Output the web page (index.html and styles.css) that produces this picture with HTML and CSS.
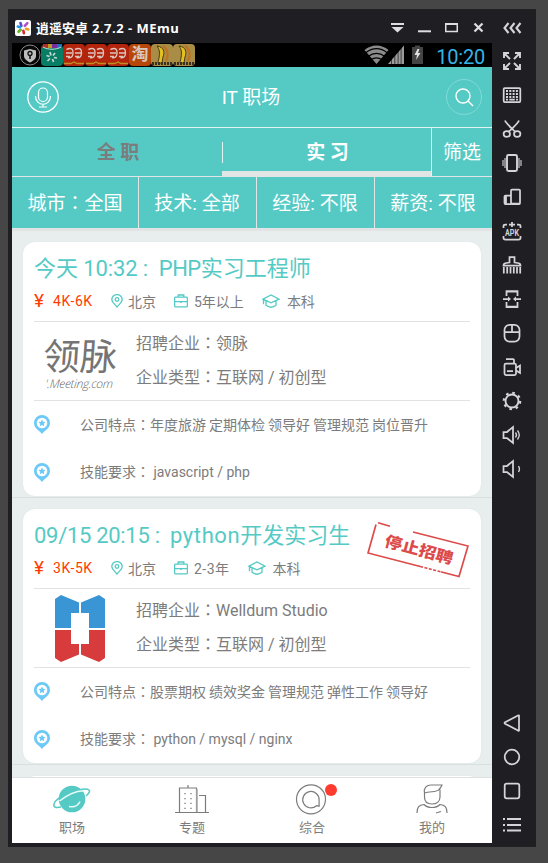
FILE: index.html
```html
<!DOCTYPE html>
<html lang="zh-CN">
<head>
<meta charset="utf-8">
<title>逍遥安卓 2.7.2 - MEmu</title>
<link rel="stylesheet" href="styles.css">
</head>
<body>
<svg width="0" height="0" class="defs" aria-hidden="true">
  <symbol id="pin" viewBox="0 0 12 14"><path d="M6 13C3 9.500.8 8 .8 5.600a5.200 5 0 0 1 10.400 0C11.200 8 9 9.500 6 13Z"/><circle cx="6" cy="5.500" r="1.800"/></symbol>
  <symbol id="bag" viewBox="0 0 14 14"><rect x=".6" y="3.200" width="12.800" height="9.700" rx="1"/><path d="M4.200 3V1h5.600v2M.6 7.700h12.800"/><path d="M6 7h2v1.800H6z" fill="currentColor" stroke="none"/></symbol>
  <symbol id="cap" viewBox="0 0 18 14"><path d="M1 5.200 9 1l8 4.200-8 3.700zM4 7v4.300c3 2.300 7 2.300 10 0V7M1.500 5.500v4.800"/></symbol>
  <symbol id="star-pin" viewBox="0 0 16 19"><path fill="#6cc9f8" d="M8 19C5.500 15.500 0 13.500 0 8a8 8 0 0 1 16 0c0 5.500-5.500 7.500-8 11Z"/><circle cx="8" cy="8" r="5.300" fill="#fff"/><path fill="#6cc9f8" d="m8 4.600 1.100 2.200 2.400.3-1.700 1.700.4 2.400L8 10.100l-2.200 1.100.4-2.400-1.700-1.700 2.400-.3z"/></symbol>
  <symbol id="memu" viewBox="0 0 16 16"><rect width="16" height="16" rx="2" fill="#fff"/><g stroke-width="2.600" stroke-linecap="round"><path stroke="#5b4bd0" d="M6.400 5.800 5.500 3"/><path stroke="#b34ccf" d="m9.800 5.800 2.500-2.600"/><path stroke="#ef9a1d" d="m11 8.800 2.300.6"/><path stroke="#d8292c" d="m8.400 10.800.5 2.400"/><path stroke="#69b52e" d="m5.700 9.900-2.200 1.700"/><path stroke="#2196e8" d="M5 7.300 2.800 6.600"/></g></symbol>
  <symbol id="shop" viewBox="0 0 22 22"><rect width="22" height="22" rx="4" fill="#b3240c"/><g fill="none" stroke="#dcc4bd" stroke-width="1.400"><path d="M3.500 5.500c5-2.500 6.500 0 6.500 3s-1 6-5 5M3 9h6M3 12.500h4M12 5.500c5-2.500 6.500 0 6.500 3s-1 6-5 5M12 9h6M12 12.500h4"/></g><path d="M1 19.500h7l3-1.500 3 1.500h7" fill="none" stroke="#bd8f20" stroke-width="1.300"/></symbol>
  <symbol id="banana" viewBox="0 0 22 22"><rect width="22" height="22" rx="4" fill="#a98c45"/><path fill="#e2c01f" stroke="#4b3b14" d="M6 2c7 1 8 6 6 11l-1 6H7c0-3 4-11-1-17Z"/><path fill="none" stroke="#c26f1f" stroke-width="2" d="M12 2c5 3 6 9 3 15"/><path stroke="#3a3022" stroke-width="3" stroke-dasharray="2 1" d="M1 19.500h20"/></symbol>
</svg>

<div class="window">
  <div class="main">
    <header class="titlebar">
      <svg class="logo"><use href="#memu"/></svg>
      <h1>逍遥安卓<span> 2.7.2 - MEmu</span></h1>
      <nav class="controls">
        <svg viewBox="0 0 27 20"><path d="M7 5h13v2H7zM7.500 9h12l-6 5.500z"/></svg>
        <svg viewBox="0 0 27 20"><path d="M7 12.300h13v2H7z"/></svg>
        <svg viewBox="0 0 27 20"><path fill-rule="evenodd" d="M7 5h13v9.300H7zm1.500 2v5.800h10V7z"/></svg>
        <svg viewBox="0 0 27 20"><path d="m9.500 5.500 8 8m0-8-8 8" stroke="#dedee0" stroke-width="2.200"/></svg>
      </nav>
    </header>

    <div class="screen">
      <div class="status">
        <div class="notes">
          <svg viewBox="0 0 22 22"><circle cx="11" cy="11" r="10" fill="#080808" stroke="#8a8a8a"/><path d="M5 6.500 11 5l6 1.500V12c0 3-3 5-6 6.500C8 17 5 15 5 12z" fill="#bdbdbd"/><circle cx="11" cy="9.500" r="2" fill="none" stroke="#111" stroke-width="1.300"/><path d="M11 11.500V15" stroke="#111" stroke-width="1.500"/></svg>
          <svg viewBox="0 0 22 22"><rect y="1" width="22" height="21" rx="4" fill="#087d66"/><path fill="#a8312b" d="M2 0h5v4H1z"/><path fill="#b79a1f" d="M7 0h4v4H7z"/><path fill="#7b2aa2" d="M11 0h5v4h-5z"/><path fill="#1b72b5" d="M16 0h5v4h-5z"/><path d="M2 3c5 3 13 3 18 0" stroke="#c5d8d2" fill="none"/><path d="m10 11.500-1-3.500m3 3.500 2-2.500m-1 4.500 3 .5m-4.500 1 1 3m-3.500-3.500-2.500 2.500m2-4.500-3-1" stroke="#c5d8d2" stroke-width="1.700"/></svg>
          <svg><use href="#shop"/></svg>
          <svg><use href="#shop"/></svg>
          <svg><use href="#shop"/></svg>
          <span class="tao">淘</span>
          <svg><use href="#banana"/></svg>
          <svg><use href="#banana"/></svg>
        </div>
        <svg class="signals" viewBox="0 0 60 20"><path d="M.5 5c7-6 17-6 24 0l-12 14z" fill="#8b8b8b"/><path d="M1.500 8c7-5.500 15-5.500 22 0M4 11.400c5.500-4 11.500-4 17 0M7 14.600c4-2.600 7-2.600 11 0" fill="none" stroke="#000" stroke-width="1.200"/><path d="M40 .5V19H24z" fill="#9b9b9b"/><path d="M27.500 8v12m3.300-15v15m3.300-18v18m3-20v20" stroke="#000" stroke-width=".6"/><path d="M48 2h3V.5h5V2h3v17H48z" fill="#444"/><path d="m53.500 4-3 6h2.500l-1 5 4.500-7H54l1.500-4z" fill="#e0e0e0"/></svg>
        <time>10:20</time>
      </div>

      <div class="appbar">
        <svg class="mic" viewBox="0 0 32 32"><circle cx="16" cy="16" r="15.200" stroke-width="1.300"/><rect x="11.500" y="7" width="9" height="13.500" rx="4.500"/><path d="M8.500 15c0 11 15 11 15 0M16 23v3M12 26h8"/></svg>
        <h2>IT 职场</h2>
        <svg class="search" viewBox="0 0 36 36"><circle cx="18" cy="18" r="17.500" stroke="#82dad5"/><g stroke="#fff" stroke-width="1.400"><circle cx="17" cy="17" r="7"/><path d="m22 22 5 5"/></g></svg>
      </div>

      <div class="tabs">
        <div class="tab off">全 职</div>
        <div class="tab on">实 习</div>
        <div class="pick">筛选</div>
      </div>

      <div class="filters">
        <div>城市<i lang="zh-TW">：</i>全国</div>
        <div>技术: 全部</div>
        <div>经验: 不限</div>
        <div>薪资: 不限</div>
      </div>

      <div class="list">
        <section class="item">
          <article class="card">
            <h3><span class="when">今天 10:32 :&nbsp; </span><span class="caps">PHP</span>实习工程师</h3>
            <div class="meta">
              <b>¥</b><em>4K-6K</em>
              <svg class="pin"><use href="#pin"/></svg><span>北京</span>
              <svg class="bag"><use href="#bag"/></svg><span>5年以上</span>
              <svg class="cap"><use href="#cap"/></svg><span>本科</span>
            </div>
            <div class="company">
              <div class="brand">
                <div class="meeting"><strong>领脉</strong><small>'.Meeting.com</small></div>
              </div>
              <div class="facts"><p>招聘企业<i lang="zh-TW">：</i>领脉</p><p>企业类型<i lang="zh-TW">：</i>互联网 / 初创型</p></div>
            </div>
            <div class="features">
              <p><svg><use href="#star-pin"/></svg><span>公司特点<i lang="zh-TW">：</i>年度旅游 定期体检 领导好 管理规范 岗位晋升</span></p>
              <p><svg><use href="#star-pin"/></svg><span>技能要求<i lang="zh-TW">：</i> javascript / php</span></p>
            </div>
          </article>
        </section>

        <section class="item">
          <article class="card">
            <h3><span class="when date">09/15 20:15 :&nbsp; </span><span class="lower">python</span>开发实习生</h3>
            <div class="meta">
              <b>¥</b><em>3K-5K</em>
              <svg class="pin"><use href="#pin"/></svg><span>北京</span>
              <svg class="bag"><use href="#bag"/></svg><span class="years">2-3年</span>
              <svg class="cap"><use href="#cap"/></svg><span>本科</span>
            </div>
            <div class="company">
              <div class="brand">
                <svg class="welldum" viewBox="0 0 50 67"><path fill="#3a95d5" d="M0 4 6 0l18 7.500V18h-8v15H0zM50 4l-6-4-18 7.500V18h8v15h16z"/><path fill="#d83b3b" d="M0 63l6 4 18-7.500V49h-8V35H0zM50 63l-6 4-18-7.500V49h8V35h16z"/></svg>
              </div>
              <div class="facts"><p>招聘企业<i lang="zh-TW">：</i>Welldum Studio</p><p>企业类型<i lang="zh-TW">：</i>互联网 / 初创型</p></div>
            </div>
            <div class="features">
              <p><svg><use href="#star-pin"/></svg><span>公司特点<i lang="zh-TW">：</i>股票期权 绩效奖金 管理规范 弹性工作 领导好</span></p>
              <p><svg><use href="#star-pin"/></svg><span>技能要求<i lang="zh-TW">：</i> python / mysql / nginx</span></p>
            </div>
            <div class="stamp">
              <svg viewBox="0 0 102 56"><path d="M9 2.500 1 31l91 23.500 9-30.500L46 10M11 .8l12 3.400" fill="none" stroke="#dc4a4a" stroke-width="1.700"/><path d="m56 45.300 18 4.700" stroke="#fff" stroke-width="2.500" stroke-dasharray="1.500 3"/></svg>
              <span>停止招聘</span>
            </div>
          </article>
        </section>

        <section class="item"><article class="card"></article></section>
      </div>

      <nav class="bottom">
        <a>
          <svg viewBox="0 0 40 32"><circle cx="20" cy="16" r="13.300" fill="#55cac5"/><path d="M9 24c-5 1-8 .5-7-3C4 13 33 3 37 7c1.500 1-.5 4-3 6" fill="none" stroke="#55cac5" stroke-width="1.500"/><path d="M7.500 18C15 12 24 8 31.500 7.700M17 23.500c5 1 9-.5 11-5" fill="none" stroke="#e6fbf9" stroke-width="1.600"/></svg>
          <span>职场</span>
        </a>
        <a>
          <svg viewBox="0 0 40 32"><path d="M3 29.500h34M7.500 29V5h17v24M16 5V2M27 12.500h6.500V29" fill="none" stroke="#7c7c7c" stroke-width="1.200"/><path d="M25 6v23" stroke="#a8a8a8" stroke-width="1.500"/><path d="M13 10v17M19 10v17" stroke="#7c7c7c" stroke-width="1.300" stroke-dasharray="1.300 3.600"/></svg>
          <span>专题</span>
        </a>
        <a>
          <svg viewBox="0 0 40 32"><g fill="none" stroke="#7c7c7c" stroke-width="1.200"><circle cx="19" cy="16.300" r="14.500"/><path d="M24.500 22.700a8.200 8.200 0 1 1 2.600-5.500v6z"/></g></svg>
          <u></u>
          <span>综合</span>
        </a>
        <a>
          <svg viewBox="0 0 40 32"><path d="M12.500 10c-1-5 2-8 6.500-8h11c-1 2.500-2 3.500-3 4.500-2 3-9 1.500-14.500 3.500V14c0 4.500 3 7 7.500 7s8-2.500 8-7V6.500M5 30c0-6 2-8 7-8.500 4 4 12 4 16 0 5 .5 7 2.500 7 8.500M24 30l5-1.500" fill="none" stroke="#7c7c7c" stroke-width="1.200"/></svg>
          <span>我的</span>
        </a>
      </nav>
    </div>
  </div>

  <aside class="tools">
    <svg class="collapse" viewBox="0 0 20 20"><path d="M6.500 5 2.500 10l4 5M12.500 5l-4 5 4 5M18.500 5l-4 5 4 5" stroke-width="2.100"/></svg>
    <svg viewBox="0 0 20 20"><path d="M2 7V2h5M2.500 2.500 8 8M13 2h5v5M17.500 2.500 12 8M2 13v5h5m-4.500-.5L8 12m5 6h5v-5m-.5 4.500L12 12" stroke-width="1.900"/></svg>
    <svg viewBox="0 0 20 20"><rect x="1.700" y="3" width="16.600" height="14" rx="1"/><path d="M4 6h12M4 9h12M4 12h12" stroke-width="2" stroke-dasharray="2 1.300"/><path d="M4 14.500h12" stroke-dasharray="2 1.300 5.500 1.300"/></svg>
    <svg viewBox="0 0 20 20"><path d="M3 1.500c1 3 7 8 10.500 11.500M17 1.500c-1 3-7 8-10.500 11.500"/><ellipse cx="4.800" cy="15" rx="3.200" ry="2.800"/><ellipse cx="15.200" cy="15" rx="3.200" ry="2.800"/></svg>
    <svg viewBox="0 0 20 20"><rect x="5" y="2" width="10" height="16" rx="1.500" stroke-width="1.900"/><path d="M3 5v10M17 5v10M1 7v6M19 7v6" stroke-width="1.100"/></svg>
    <svg viewBox="0 0 20 20"><rect x="9" y="2.500" width="9" height="14.500" rx="1"/><path d="M9 8.500H3.500q-1 0-1 1V16q0 1 1 1H9M4 8v9M9 16.500h9"/></svg>
    <svg viewBox="0 0 20 20"><path d="M1.500 7V5q0-1.500 2-1.500H5M15 3.500h1.500q2 0 2 1.500v2M1.500 15v2q0 1.500 2 1.500h13q2 0 2-1.500v-2M10 1v5M7 3.500h6"/><text x="10" y="15" textLength="14" lengthAdjust="spacingAndGlyphs">APK</text></svg>
    <svg viewBox="0 0 20 20"><path d="M1.500 10.500c0-2 1-2.500 6-3V2h5v5.500c5 .5 6 1 6 3zM1.800 12v6.500M5.200 12v6.500M8.500 12v6.500M11.800 12v6.500M15 12v6.500M18.200 12v6.500"/></svg>
    <svg viewBox="0 0 20 20"><path d="M4.500 7V2h11v5M4.500 13v5h11v-5M5 17.500h10M5 2.500h10M1 10h7M19 10h-7"/><path d="M6 7.500 9 10l-3 2.500zM14 7.500 11 10l3 2.500z" fill="#d5d5d7" stroke="none"/></svg>
    <svg viewBox="0 0 20 20"><rect x="2.500" y="1.800" width="15" height="16.800" rx="5"/><path d="M2.500 9h15M10 2v7"/></svg>
    <svg viewBox="0 0 20 20"><rect x="2.500" y="6.500" width="11.500" height="11.500" rx="1.500"/><path d="M4 2h7q1 0 1 1v3M5 14h6M14 11l4-2.500v7.500L14 13.500"/></svg>
    <svg viewBox="0 0 20 20"><circle cx="10" cy="10" r="6.500" stroke-width="1.900"/><circle cx="10" cy="10" r="8.200" stroke-width="2.200" stroke-dasharray="2.600 3.840"/></svg>
    <svg viewBox="0 0 20 20"><path d="M1.500 7H5l6-5v16l-6-5H1.500z"/><path d="M13.500 7.500q2 2.500 0 5M15.500 5.500q3.500 4.500 0 9" stroke-width="1.300"/></svg>
    <svg viewBox="0 0 20 20"><path d="M1.500 7H5l6-5v16l-6-5H1.500z"/><path d="M16.500 7q2 3 0 6" stroke-width="1.300"/></svg>
    <svg class="back" viewBox="0 0 20 20"><path d="M17 2.500v15q-.3.600-1 0L3 10.700q-1-.7 0-1.400L16 2.500q.6-.3 1 0Z"/></svg>
    <svg viewBox="0 0 20 20"><circle cx="10" cy="10" r="7.300"/></svg>
    <svg viewBox="0 0 20 20"><rect x="2.700" y="2.700" width="14.600" height="14.600" rx="2"/></svg>
    <svg viewBox="0 0 20 20"><path d="M1 4h2m2 0h14M1 10h2m2 0h14M1 15.500h2m2 0h14" stroke-width="1.900"/></svg>
  </aside>
</div>
</body>
</html>
```
FILE: styles.css
```css
* { box-sizing: border-box; }

body {
  margin: 0;
  width: 548px;
  height: 863px;
  overflow: hidden;
  padding: 9px 12px 16px 8px;
  background: #464646;
  font-family: Roboto, "Noto Sans CJK SC", sans-serif;
}

h1, h2, h3, p { margin: 0; font-weight: 400; }
i { font-style: normal; font-family: "Noto Sans CJK TC", sans-serif; line-height: 0; }
svg { display: block; flex: none; }
.defs { position: absolute; }

.window {
  display: flex;
  height: 838px;
  background: #1f1e23;
}
.main { width: 484px; padding-left: 4px; }

.titlebar {
  display: flex;
  align-items: center;
  height: 34px;
  padding: 4px 0 0 3px;
}
.logo { width: 16px; height: 16px; margin-top: -1px; }
.titlebar h1 {
  margin: -2px auto 0 5px;
  color: #fff;
  font: 700 13px "Open Sans", "Noto Sans CJK SC", sans-serif;
  white-space: nowrap;
}
.titlebar h1 span { letter-spacing: .5px; }
.controls { display: flex; }
.controls svg { width: 27px; height: 20px; fill: #dedee0; }

.screen {
  display: flex;
  flex-direction: column;
  width: 480px;
  height: 800px;
  background: #e8eeee;
}

.status {
  display: flex;
  flex: none;
  height: 24px;
  padding: 1px 7px 0;
  background: #000;
}
.notes { display: flex; margin-right: auto; }
.notes svg { width: 22px; height: 22px; }
.tao {
  width: 22px;
  height: 22px;
  border-radius: 4px;
  background: #b74708;
  color: #d8c7bd;
  font-size: 17px;
  font-weight: 700;
  line-height: 20px;
  text-align: center;
}
.signals { width: 60px; height: 20px; margin: 1px 12px 0 0; }
.status time { color: #33b5e5; font-size: 20px; line-height: 27px; letter-spacing: -.2px; }

.appbar {
  display: flex;
  flex: none;
  align-items: center;
  justify-content: space-between;
  height: 60px;
  padding: 0 10px 0 15px;
  background: #55cac5;
  color: #fff;
}
.appbar h2 { font-size: 19px; margin: -4px 3px 0 0; }
.mic, .search { fill: none; stroke: #fff; }
.mic { width: 32px; height: 32px; stroke-width: 1.200; }
.search { width: 36px; height: 36px; }

.tabs {
  display: flex;
  flex: none;
  height: 50px;
  border-top: 1px solid #e1f3f2;
  border-bottom: 1px solid #e1e5e5;
  background: #55cac5;
  color: #fff;
  font-size: 19px;
  line-height: 50px;
  text-align: center;
}
.tab { width: 210px; height: 48px; font-weight: 700; }
.off { color: #7c7c7c; padding-left: 2px; }
.on {
  width: 209px;
  padding-left: 2px;
  border-bottom: 5px solid #e1e5e5;
  background: linear-gradient(#e1f3f2, #e1f3f2) 0 14px / 1px 21px no-repeat;
}
.pick { flex: 1; height: 48px; border-left: 1px solid #e1f3f2; }

.filters {
  display: grid;
  flex: none;
  grid-template-columns: 126px 118px 118px 118px;
  height: 54px;
  border-bottom: 3px solid #e1e3e4;
  background: #55cac5;
  color: #fff;
  font-size: 19px;
  line-height: 54px;
  text-align: center;
  white-space: nowrap;
}
.filters div { height: 51px; }
.filters div + div { border-left: 1px solid #e1e5e5; padding-right: 1px; }

.list { flex: 1; min-height: 0; overflow: hidden; }
.item {
  height: 267px;
  padding: 11px 11px 1px;
  border-bottom: 1px solid #d9dede;
}
.card {
  position: relative;
  height: 254px;
  padding: 11px 11px 0;
  border-radius: 12px;
  background: #fff;
  box-shadow: 0 0 1px #d2d8d8;
  color: #7c7c7c;
}
.card h3 {
  height: 32px;
  color: #55cac5;
  font-size: 22px;
  line-height: 32px;
  white-space: nowrap;
}
.when { letter-spacing: -.1px; }
.date { letter-spacing: -.3px; }
.caps { letter-spacing: -.5px; }
.lower { letter-spacing: .6px; }

.meta {
  display: flex;
  align-items: center;
  height: 37px;
  padding-bottom: 5px;
  border-bottom: 1px solid #e1e3e3;
  font-size: 14px;
  white-space: nowrap;
}
.meta b, .meta em { color: #ff3c00; font-style: normal; }
.meta b { width: 19px; font-size: 19px; font-weight: 400; line-height: 30px; }
.meta em { width: 58px; letter-spacing: .6px; }
.meta svg { fill: none; stroke: #55cac5; stroke-width: 1.300; color: #55cac5; }
.years { letter-spacing: .5px; }
.pin { width: 12px; height: 14px; margin-right: 5px; }
.bag { width: 14px; height: 14px; margin: 0 6px 0 18px; }
.cap { width: 18px; height: 14px; margin: 0 7px 0 18px; }

.company {
  display: flex;
  height: 79px;
  border-bottom: 1px solid #e1e3e3;
}
.brand { display: flex; width: 102px; }
.welldum { width: 50px; height: 67px; margin: 6px 0 0 21px; }
.meeting { width: 84px; padding: 14px 0 0 9px; transform: skewX(-4deg); }
.meeting strong, .meeting small { display: block; white-space: nowrap; }
.meeting strong { font-size: 37px; font-weight: 400; line-height: 43px; color: #747474; }
.meeting small { margin: -2px 0 0 4px; font: italic 300 12px/13px "Open Sans", sans-serif; color: #666; letter-spacing: -.3px; }
.facts { padding-top: 5px; font-size: 16px; line-height: 34px; }

.features p {
  display: flex;
  align-items: center;
  height: 48px;
  font-size: 14px;
  line-height: 18px;
  white-space: pre;
}
.features p:first-child { height: 47px; word-spacing: -.5px; }
.features svg { width: 16px; height: 19px; margin-right: 30px; }

.stamp { position: absolute; left: 344px; top: 13px; width: 102px; height: 56px; }
.stamp span {
  position: absolute;
  left: 17px;
  top: 16px;
  color: #dc4a4a;
  font-size: 17.500px;
  font-weight: 900;
  line-height: 24px;
  white-space: nowrap;
  transform: rotate(15deg) scaleY(.88);
}

.bottom {
  display: grid;
  flex: none;
  grid-template-columns: repeat(4, 120px);
  height: 66px;
  border-top: 1px solid #dde1e1;
  background: #fff;
  color: #7c7c7c;
  font-size: 13px;
}
.bottom a { position: relative; display: flex; flex-direction: column; align-items: center; padding-top: 5px; }
.bottom svg { width: 40px; height: 32px; }
.bottom span { line-height: 18px; margin-top: 4px; }
.bottom u { position: absolute; left: 73px; top: 6px; width: 12px; height: 12px; border-radius: 50%; background: #ff3b30; }

.tools {
  display: flex;
  flex-direction: column;
  align-items: center;
  width: 44px;
  padding: 9px 4px 0 0;
}
.tools svg { width: 20px; height: 20px; margin-bottom: 14px; fill: none; stroke: #d5d5d7; stroke-width: 1.750; }
.tools .collapse { margin-bottom: 13px; }
.tools .back { margin-top: auto; }
.tools svg:last-child { margin-bottom: 12px; }
.tools text { fill: #d5d5d7; stroke: none; font: 700 8.500px Roboto, sans-serif; text-anchor: middle; }
```
